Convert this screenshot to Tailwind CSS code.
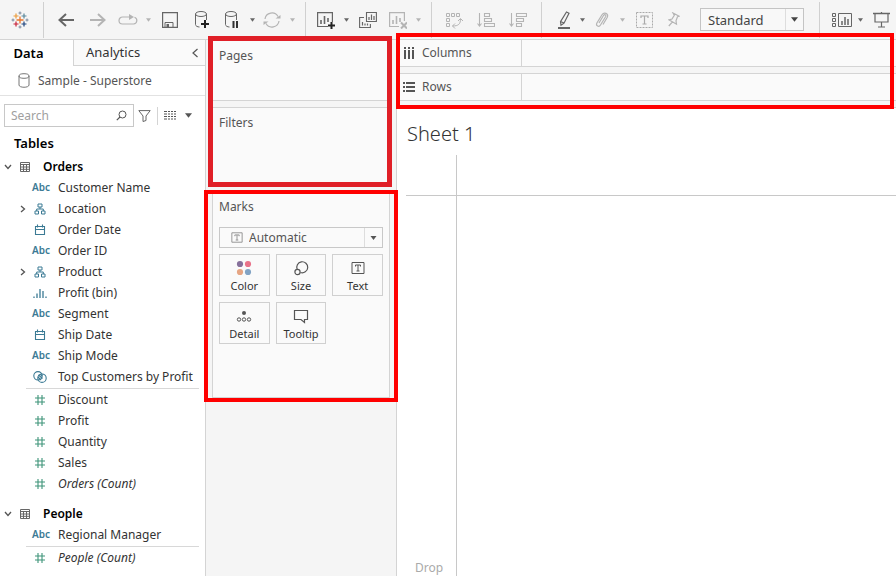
<!DOCTYPE html>
<html lang="en">
<head>
  <meta charset="utf-8">
  <meta name="viewport" content="width=device-width, initial-scale=1">
  <title>Sheet 1</title>
  <script src="https://cdn.jsdelivr.net/npm/@tailwindcss/browser@4"></script>
</head>
<body class="h-screen flex flex-col overflow-hidden bg-white font-['Noto_Sans','Liberation_Sans',sans-serif] text-xs text-[#333]">

  <!-- Shared icons -->
  <svg class="hidden">
    <symbol id="caret" viewBox="0 0 6 4"><path d="M0 0h6L3 4z" fill="currentColor"/></symbol>
    <symbol id="cylinder" viewBox="0 0 20 20">
      <path d="M3.500 4v10.500c0 1.500 2 2.500 4 2.500M14.500 4v6" fill="none" stroke="currentColor"/>
      <ellipse cx="9" cy="4" rx="5.500" ry="2.500" fill="none" stroke="currentColor"/>
    </symbol>
    <symbol id="table" viewBox="0 0 12 12">
      <path d="M1.500 1.500h9v9h-9zM1 3.500h10M1 6h10M1 8.300h10M4.500 3v8M7.500 3v8" fill="none" stroke="currentColor"/>
    </symbol>
    <symbol id="down" viewBox="0 0 8 6"><path d="M1 1l3 3.500L7 1" fill="none" stroke="currentColor" stroke-width="1.300"/></symbol>
    <symbol id="right" viewBox="0 0 6 8"><path d="M1 1l3.500 3L1 7" fill="none" stroke="currentColor" stroke-width="1.300"/></symbol>
    <symbol id="tree" viewBox="0 0 12 12">
      <path d="M4 1h4v3H4zM1 8h3.500v3H1zM7.500 8H11v3H7.500zM6 4v2M2.700 8V6h6.600v2" fill="none" stroke="currentColor"/>
    </symbol>
    <symbol id="calendar" viewBox="0 0 12 12">
      <path d="M1.500 2.500h9v8h-9zM1.500 5.500h9M3.500 .5v3M8.500 .5v3" fill="none" stroke="currentColor" stroke-width="1.100"/>
    </symbol>
    <symbol id="bins" viewBox="0 0 14 12"><path d="M1 9.500V11M4 6.500V11M7 2v9M10 4v7M13 9.500V11" stroke="currentColor" stroke-width="1.300"/></symbol>
    <symbol id="sets" viewBox="0 0 14 12">
      <g fill="none" stroke="currentColor" stroke-width="1.100"><circle cx="5" cy="4.800" r="4.200"/><circle cx="9" cy="7.200" r="4.200"/><path d="M5.500 4l4 3.500M5 6l3 3M7 3.200l2.200 2"/></g>
    </symbol>
    <symbol id="hash" viewBox="0 0 12 12"><path d="M4 1v10M8 1v10M1 4h10M1 8h10" stroke="currentColor" stroke-width="1.100"/></symbol>
    <symbol id="textbox" viewBox="0 0 14 12">
      <path d="M1 .5h12v11H1z" fill="none" stroke="currentColor"/>
      <path d="M4.500 4.500V3h5v1.500M7 3v6M5.500 9h3" fill="none" stroke="currentColor"/>
    </symbol>
  </svg>

  <!-- Toolbar -->
  <header class="flex shrink-0 items-center h-10 overflow-hidden border-b border-[#d4d4d4] bg-[#f5f5f5] text-[#666] [&>*]:shrink-0 [&>button]:flex [&>button]:items-center [&>button]:justify-center [&>button]:h-8">
    <button class="w-10" aria-label="Start page">
      <svg class="size-[18px]" viewBox="0 0 18 18" fill="none">
        <path d="M9 5.500v7M5.500 9h7" stroke="#e8762d" stroke-width="1.300"/>
        <path d="M5 2.500v5M2.500 5h5" stroke="#eb9c3b" stroke-width="1.200"/>
        <path d="M13 2.500v5M10.500 5h5" stroke="#59879b" stroke-width="1.200"/>
        <path d="M5 10.500v5M2.500 13h5" stroke="#c72037" stroke-width="1.200"/>
        <path d="M13 10.500v5M10.500 13h5" stroke="#1f447e" stroke-width="1.200"/>
        <path d="M9 .5v3M7.500 2h3M9 14.500v3M7.500 16h3M2 7.500v3M.5 9h3M16 7.500v3M14.500 9h3" stroke="#7a8a9e"/>
      </svg>
    </button>
    <span class="ml-[3px] mr-[6px] w-px h-9 bg-[#d0d0d0]"></span>
    <button class="w-8" aria-label="Undo"><svg class="w-4 h-[14px]" viewBox="0 0 16 14"><path d="M16 7H1.500M8 1L1.500 7 8 13" fill="none" stroke="currentColor" stroke-width="2"/></svg></button>
    <button class="w-8 text-[#b4b4b4]" aria-label="Redo"><svg class="w-4 h-[14px]" viewBox="0 0 16 14"><path d="M0 7h14.500M8 1l6.500 6L8 13" fill="none" stroke="currentColor" stroke-width="2"/></svg></button>
    <button class="w-7 text-[#b4b4b4]" aria-label="Replay"><svg class="w-5 h-3" viewBox="0 0 20 12"><path d="M6 3H4.500a3.500 3.500 0 0 0 0 7h11a3.500 3.500 0 0 0 1-6.800M6 3h6" fill="none" stroke="currentColor" stroke-width="1.200"/><path d="M11 0l5 3-5 3z" fill="currentColor"/></svg></button>
    <button class="w-3 text-[#b4b4b4]" aria-label="Replay options"><svg class="w-[5px] h-1"><use href="#caret"/></svg></button>
    <button class="w-8" aria-label="Save"><svg class="size-4" viewBox="0 0 16 16"><path d="M.6.6h14.800v14.800H.6z" fill="none" stroke="currentColor" stroke-width="1.200"/><path d="M3 15v-4.500h8V15" fill="none" stroke="currentColor"/><path d="M4.500 12H7v3H4.500z" fill="currentColor"/></svg></button>
    <button class="w-8" aria-label="New data source"><svg class="size-5" viewBox="0 0 20 20"><use href="#cylinder"/><path d="M13 10v8M9 14h8" stroke="#222" stroke-width="2"/></svg></button>
    <button class="w-7" aria-label="Pause updates"><svg class="size-5" viewBox="0 0 20 20"><use href="#cylinder"/><path d="M11.500 11v7M15 11v7" stroke="#333" stroke-width="2"/></svg></button>
    <button class="w-3" aria-label="Update options"><svg class="w-[5px] h-1"><use href="#caret"/></svg></button>
    <button class="w-7 text-[#b4b4b4]" aria-label="Refresh"><svg class="size-[18px]" viewBox="0 0 18 18"><path d="M2 8a7 7 0 0 1 13-2.500M16 10a7 7 0 0 1-13 2.500" fill="none" stroke="currentColor" stroke-width="1.200"/><path d="M12.500 7.500h5V4zM5.500 10.500h-5V14z" fill="currentColor"/></svg></button>
    <button class="w-3 text-[#b4b4b4]" aria-label="Refresh options"><svg class="w-[5px] h-1"><use href="#caret"/></svg></button>
    <span class="ml-[7px] mr-[6px] w-px h-9 bg-[#d0d0d0]"></span>
    <button class="w-7" aria-label="New worksheet"><svg class="size-[18px]" viewBox="0 0 18 18"><path d="M11 15.500H.6V1.600h14.800V11" fill="none" stroke="currentColor" stroke-width="1.200"/><path d="M4 9v4M7.500 5v8M11 7v4" stroke="currentColor" stroke-width="1.600"/><path d="M14.500 11v7M11 14.500h7" stroke="#222" stroke-width="2"/></svg></button>
    <button class="w-3" aria-label="New worksheet options"><svg class="w-[5px] h-1"><use href="#caret"/></svg></button>
    <button class="w-8" aria-label="Duplicate"><svg class="size-[18px]" viewBox="0 0 18 18"><path d="M7.500 1.500h9.900v9H7.500zM5 6.500H.6v10h10.800V13" fill="none" stroke="currentColor" stroke-width="1.100"/><path d="M10 6v3M12.500 3.500V9M15 5v4M3.500 11v3.500M6 12.500v2M8.500 12.500v2" stroke="currentColor" stroke-width="1.200"/></svg></button>
    <button class="w-7 text-[#b4b4b4]" aria-label="Clear sheet"><svg class="size-[18px]" viewBox="0 0 18 18"><path d="M10 15.500H.6V1.600h14.800V10" fill="none" stroke="currentColor" stroke-width="1.200"/><path d="M4 9v4M7.500 5v8M11 7v4" stroke="currentColor" stroke-width="1.600"/><path d="M12 11.500l6 6M18 11.500l-6 6" stroke="currentColor" stroke-width="2"/></svg></button>
    <button class="w-3 text-[#b4b4b4]" aria-label="Clear options"><svg class="w-[5px] h-1"><use href="#caret"/></svg></button>
    <span class="ml-[7px] mr-[6px] w-px h-9 bg-[#d0d0d0]"></span>
    <button class="w-8 text-[#b4b4b4]" aria-label="Swap rows and columns"><svg class="size-[18px]" viewBox="0 0 18 18" fill="none" stroke="currentColor"><path d="M1.500 2.500h3v3h-3zM6.500 2.500h3v3h-3zM11.500 2.500h3v3h-3zM1.500 7.500h3v3h-3zM1.500 12.500h3v3h-3zM15.500 8c0 5-2 7-8 7M13 10l2.500-2.500L18 10M10 12.500L7.500 15l2.500 2.500"/></svg></button>
    <button class="w-8 text-[#b4b4b4]" aria-label="Sort ascending"><svg class="size-[18px]" viewBox="0 0 18 18" fill="none" stroke="currentColor"><path d="M2.500 2v13M.5 12.500l2 2.500 2-2.500M7.500 2.500h5v3h-5zM7.500 7.500h7v3h-7zM7.500 12.500h10v3h-10z" stroke-width="1.100"/></svg></button>
    <button class="w-8 text-[#b4b4b4]" aria-label="Sort descending"><svg class="size-[18px]" viewBox="0 0 18 18" fill="none" stroke="currentColor"><path d="M2.500 2v13M.5 12.500l2 2.500 2-2.500M7.500 2.500h10v3h-10zM7.500 7.500h7v3h-7zM7.500 12.500h5v3h-5z" stroke-width="1.100"/></svg></button>
    <span class="ml-[7px] mr-[10px] w-px h-9 bg-[#d0d0d0]"></span>
    <button class="w-6" aria-label="Highlight"><svg class="w-3 h-[18px]" viewBox="0 0 12 18" fill="none" stroke="currentColor"><path d="M8.500 1l2.500 1.200-5 10-3 2-.5-3.500zM2.500 10.500L6 12" stroke-width="1.200"/><path d="M0 17h12" stroke-width="2"/></svg></button>
    <button class="w-3" aria-label="Highlight options"><svg class="w-[5px] h-1"><use href="#caret"/></svg></button>
    <button class="w-7 text-[#b4b4b4]" aria-label="Group members"><svg class="w-[14px] h-4" viewBox="0 0 14 16"><path d="M4 11l4.500-7.500c1-1.500 3-.5 2.200 1L5.500 13c-1.500 2.500-5 .7-3.600-2L7 2.800C9-.5 14 1.500 12.300 5.200L8 12.500" fill="none" stroke="currentColor" stroke-width="1.200"/></svg></button>
    <button class="w-3 text-[#b4b4b4]" aria-label="Group options"><svg class="w-[5px] h-1"><use href="#caret"/></svg></button>
    <button class="w-8 text-[#aaa]" aria-label="Show mark labels"><svg class="w-[17px] h-4" viewBox="0 0 17 16" fill="none" stroke="currentColor"><path d="M.5.500h16v15H.5z" stroke-dasharray="2 1"/><path d="M5 6V4h7v2M8.500 4v8M6.500 12h4" stroke-width="1.200"/></svg></button>
    <button class="w-7 text-[#b4b4b4]" aria-label="Fix axes"><svg class="w-3 h-[15px]" viewBox="0 0 12 15"><path d="M5 1l6.200 3.200-1.700.6-1.500 4 .5 3.400L1 7.800 4 7l2.300-3.700zM4.500 9.800L.8 14" fill="none" stroke="currentColor" stroke-width="1.200"/></svg></button>
    <div class="relative ml-3 w-[104px] text-[13px] text-[#444]">
      <select aria-label="Fit" class="appearance-none w-full h-[23px] pl-[7px] border border-[#c4c4c4] bg-[#f8f8f8] leading-5">
        <option>Standard</option>
      </select>
      <span class="absolute inset-y-px right-px w-[18px] flex items-center justify-center border-l border-[#ddd] pointer-events-none"><svg class="w-[7px] h-[5px]"><use href="#caret"/></svg></span>
    </div>
    <span class="ml-[15px] mr-[10px] w-px h-9 bg-[#d0d0d0]"></span>
    <button class="w-6" aria-label="Show cards"><svg class="w-5 h-[14px]" viewBox="0 0 20 14" fill="none" stroke="currentColor"><path d="M.5.500h3v3h-3zM.5 5.500h3v3h-3zM.5 10.500h3v3h-3zM6.500.5h13v13h-13z"/><path d="M10 8v4M13 4v8M16 6v6" stroke-width="1.500"/></svg></button>
    <button class="w-3" aria-label="Card options"><svg class="w-[5px] h-1"><use href="#caret"/></svg></button>
    <button class="w-[30px]" aria-label="Presentation mode"><svg class="w-[17px] h-4" viewBox="0 0 17 16" fill="none" stroke="currentColor"><path d="M0 1.500h17" stroke-width="1.500"/><path d="M2 2v8h13V2M8.500 0v2M8.500 10v5M5 15h7" stroke-width="1.200"/></svg></button>
  </header>

  <main class="flex flex-1 min-h-0">

    <!-- Data pane -->
    <aside class="shrink-0 w-[206px] border-r border-[#d4d4d4] bg-white">
      <div class="flex h-[26px] text-[13px] leading-[25px]">
        <button class="w-[73px] pr-4 font-semibold text-black">Data</button>
        <button class="flex flex-1 items-center justify-between pl-3 pr-[7px] border-l border-b border-[#d4d4d4] bg-[#fafafa]">
          Analytics
          <svg class="w-[6px] h-[10px]" viewBox="0 0 6 10"><path d="M5.500 1L1 5l4.500 4" fill="none" stroke="#555" stroke-width="1.200"/></svg>
        </button>
      </div>
      <div class="flex items-center h-[30px] pl-[18px] gap-2 border-b border-[#e2e2e2] text-[#555]">
        <svg class="w-3 h-[15px]" viewBox="0 0 12 15" fill="none" stroke="#777"><ellipse cx="6" cy="3" rx="5" ry="2.300"/><path d="M1 3v9c0 3 10 3 10 0V3"/></svg>
        Sample - Superstore
      </div>
      <div class="flex items-center mt-2 pl-1">
        <label class="flex items-center w-[130px] h-[23px] pl-[6px] pr-[6px] border border-[#c8c8c8]">
          <input type="search" placeholder="Search" aria-label="Search fields" class="w-full min-w-0 outline-none placeholder-[#a0a0a0]">
          <svg class="shrink-0 size-[11px]" viewBox="0 0 11 11" fill="none" stroke="#555"><circle cx="6.500" cy="4.500" r="3.500"/><path d="M4 7L.8 10.200" stroke-width="1.200"/></svg>
        </label>
        <button class="ml-1" aria-label="Filter fields"><svg class="w-[13px] h-3" viewBox="0 0 13 12"><path d="M.8.600h11.400L8 6v4.500L5 11.500V6z" fill="none" stroke="#666"/></svg></button>
        <span class="ml-[6px] w-px h-[18px] bg-[#d4d4d4]"></span>
        <button class="flex items-center gap-[9px] ml-[6px] text-[#555]" aria-label="View options">
          <svg class="w-3 h-[9px]" viewBox="0 0 12 9"><path d="M0 .5h12M0 3h12M0 5.500h12M0 8h12" stroke="currentColor" stroke-dasharray="3 1 2 1 2 1 2 0"/></svg>
          <svg class="w-[7px] h-[5px]"><use href="#caret"/></svg>
        </button>
      </div>
      <h2 class="mt-[6px] mb-[3px] pl-[14px] leading-5 text-[13px] font-semibold text-black">Tables</h2>

      <section class="[&_li]:flex [&_li]:items-center [&_li]:h-[21px] [&_li>svg]:w-[14px] [&_li>svg]:h-3 [&_li>svg]:mr-[11px] [&_li>b]:w-[26px] [&_li>b]:text-[10px] [&_li>b]:font-semibold [&_li>b]:text-[#3b7a94]">
        <h3 class="flex items-center h-[21px] pl-1 font-semibold text-black">
          <svg class="w-2 h-[6px] text-[#555]"><use href="#down"/></svg>
          <svg class="ml-[7px] mr-3 size-3 text-[#666]"><use href="#table"/></svg>
          Orders
        </h3>
        <ul class="pb-px text-[#3b7a94]">
          <li class="pl-8"><b>Abc</b><span class="text-[#333]">Customer Name</span></li>
          <li class="pl-5"><i class="w-[13px]"><svg class="w-[6px] h-2 text-[#555]"><use href="#right"/></svg></i><svg><use href="#tree"/></svg><span class="text-[#333]">Location</span></li>
          <li class="pl-[33px]"><svg><use href="#calendar"/></svg><span class="text-[#333]">Order Date</span></li>
          <li class="pl-8"><b>Abc</b><span class="text-[#333]">Order ID</span></li>
          <li class="pl-5"><i class="w-[13px]"><svg class="w-[6px] h-2 text-[#555]"><use href="#right"/></svg></i><svg><use href="#tree"/></svg><span class="text-[#333]">Product</span></li>
          <li class="pl-[33px]"><svg><use href="#bins"/></svg><span class="text-[#333]">Profit (bin)</span></li>
          <li class="pl-8"><b>Abc</b><span class="text-[#333]">Segment</span></li>
          <li class="pl-[33px]"><svg><use href="#calendar"/></svg><span class="text-[#333]">Ship Date</span></li>
          <li class="pl-8"><b>Abc</b><span class="text-[#333]">Ship Mode</span></li>
          <li class="pl-[33px]"><svg><use href="#sets"/></svg><span class="text-[#333]">Top Customers by Profit</span></li>
        </ul>
        <hr class="ml-[26px] mr-[6px] border-[#d8d8d8]">
        <ul class="text-[#3f9479]">
          <li class="pl-[33px]"><svg><use href="#hash"/></svg><span class="text-[#333]">Discount</span></li>
          <li class="pl-[33px]"><svg><use href="#hash"/></svg><span class="text-[#333]">Profit</span></li>
          <li class="pl-[33px]"><svg><use href="#hash"/></svg><span class="text-[#333]">Quantity</span></li>
          <li class="pl-[33px]"><svg><use href="#hash"/></svg><span class="text-[#333]">Sales</span></li>
          <li class="pl-[33px]"><svg><use href="#hash"/></svg><em class="text-[#333]">Orders (Count)</em></li>
        </ul>
        <h3 class="flex items-center h-[21px] mt-[9px] pl-1 font-semibold text-black">
          <svg class="w-2 h-[6px] text-[#555]"><use href="#down"/></svg>
          <svg class="ml-[7px] mr-3 size-3 text-[#666]"><use href="#table"/></svg>
          People
        </h3>
        <ul class="pb-px">
          <li class="pl-8"><b>Abc</b>Regional Manager</li>
        </ul>
        <hr class="ml-[26px] mr-[6px] border-[#d8d8d8]">
        <ul>
          <li class="pl-[33px] text-[#3f9479]"><svg><use href="#hash"/></svg><em class="text-[#333]">People (Count)</em></li>
        </ul>
      </section>
    </aside>

    <!-- Cards -->
    <div class="flex flex-col shrink-0 w-[191px] px-[6px] border-r border-[#d4d4d4] bg-[#f5f5f5] text-[#555]">
      <div class="relative flex flex-col gap-[6px]">
        <section class="h-[61px] px-[6px] pt-[6px] border border-[#d4d4d4] bg-[#fafafa] leading-[18px]">Pages</section>
        <section class="h-[77px] px-[6px] pt-[6px] border border-[#d4d4d4] bg-[#fafafa] leading-[18px]">Filters</section>
        <div class="absolute -top-1 -bottom-[3px] -left-1 -right-[2px] border-5 border-[#e01f27] pointer-events-none"></div>
      </div>

      <section class="relative h-[208px] mt-[6px] px-[6px] pt-[7px] border border-[#d4d4d4] bg-[#fafafa] leading-[18px]">
        <h2>Marks</h2>
        <div class="relative mt-[11px]">
          <select aria-label="Mark type" class="appearance-none block w-full h-[21px] pl-[29px] border border-[#c8c8c8] leading-[18px]">
            <option>Automatic</option>
          </select>
          <svg class="absolute left-3 top-[5px] w-3 h-[11px] text-[#888] pointer-events-none"><use href="#textbox"/></svg>
          <span class="absolute inset-y-px right-px w-[18px] flex items-center justify-center border-l border-[#ddd] pointer-events-none"><svg class="w-[7px] h-1"><use href="#caret"/></svg></span>
        </div>
        <div class="grid grid-cols-3 gap-[6px] mt-[6px] [&>button]:flex [&>button]:flex-col [&>button]:items-center [&>button]:justify-between [&>button]:h-[42px] [&>button]:pt-[5px] [&>button]:border [&>button]:border-[#d0d0d0] [&_svg]:size-4 text-[11px] text-[#333]">
          <button>
            <svg viewBox="0 0 16 16"><circle cx="4" cy="4" r="3.100" fill="#86709b"/><circle cx="12" cy="4" r="3.100" fill="#e9738a"/><circle cx="4" cy="12" r="3.100" fill="#e6a583"/><circle cx="12" cy="12" r="3.100" fill="#82a3c4"/></svg>
            Color
          </button>
          <button>
            <svg viewBox="0 0 16 16" fill="none" stroke="#555"><path d="M4.200 9.500A5.500 5.500 0 1 1 7.500 12.500" stroke-width="1.200"/><circle cx="4.500" cy="12" r="2.600" stroke-width="1.200"/></svg>
            Size
          </button>
          <button>
            <svg viewBox="0 0 16 16" class="text-[#555]"><use href="#textbox" x="1" y="2" width="14" height="12"/></svg>
            Text
          </button>
          <button>
            <svg viewBox="0 0 16 16" fill="none" stroke="#555"><circle cx="8" cy="5" r="2" fill="#555" stroke="none"/><circle cx="3" cy="11.500" r="1.700"/><circle cx="8" cy="11.500" r="1.700"/><circle cx="13" cy="11.500" r="1.700"/></svg>
            Detail
          </button>
          <button>
            <svg viewBox="0 0 16 16" fill="none" stroke="#555"><path d="M1.500 2.500h13v9h-3v3l-3.500-3H1.500z" stroke-width="1.200"/></svg>
            Tooltip
          </button>
        </div>
        <div class="absolute -top-px -bottom-[5px] -left-[9px] -right-[9px] border-4 border-[#ff0000] pointer-events-none"></div>
      </section>
    </div>

    <!-- Shelves and view -->
    <div class="flex flex-col flex-1 min-w-0">
      <div class="relative flex flex-col gap-[6px] pb-[6px] border-b border-[#d4d4d4] bg-[#f5f5f5] text-[#555]">
        <div class="flex h-[27px] border-b border-[#d4d4d4] bg-[#fafafa]">
          <div class="flex items-center w-[125px] pl-[7px] gap-[7px] border-r border-[#d4d4d4]">
            <svg class="w-[11px] h-3" viewBox="0 0 11 12" stroke="currentColor" stroke-width="2"><path d="M1 0v2M5 0v2M9 0v2M1 3v9M5 3v9M9 3v9"/></svg>
            Columns
          </div>
        </div>
        <div class="flex h-7 border-y border-[#d4d4d4] bg-[#fafafa]">
          <div class="flex items-center w-[125px] pl-[6px] gap-[7px] border-r border-[#d4d4d4]">
            <svg class="w-3 h-[10px]" viewBox="0 0 12 10" stroke="currentColor" stroke-width="2"><path d="M0 1h2M0 5h2M0 9h2M3 1h9M3 5h9M3 9h9"/></svg>
            Rows
          </div>
        </div>
        <div class="absolute -top-[7px] -bottom-[2px] -left-px right-[2px] border-4 border-[#ff0000] pointer-events-none"></div>
      </div>

      <h1 class="mt-3 pl-[10px] leading-7 text-xl font-light">Sheet 1</h1>
      <div class="flex flex-col flex-1 ml-[9px] mt-[7px]">
        <div class="h-[41px] border-b border-[#c8c8c8]">
          <div class="w-[51px] h-full border-r border-[#c8c8c8]"></div>
        </div>
        <div class="flex items-end flex-1 w-[51px] pl-[9px] border-r border-[#c8c8c8] text-[#aaa]">Drop</div>
      </div>
    </div>
  </main>
</body>
</html>
